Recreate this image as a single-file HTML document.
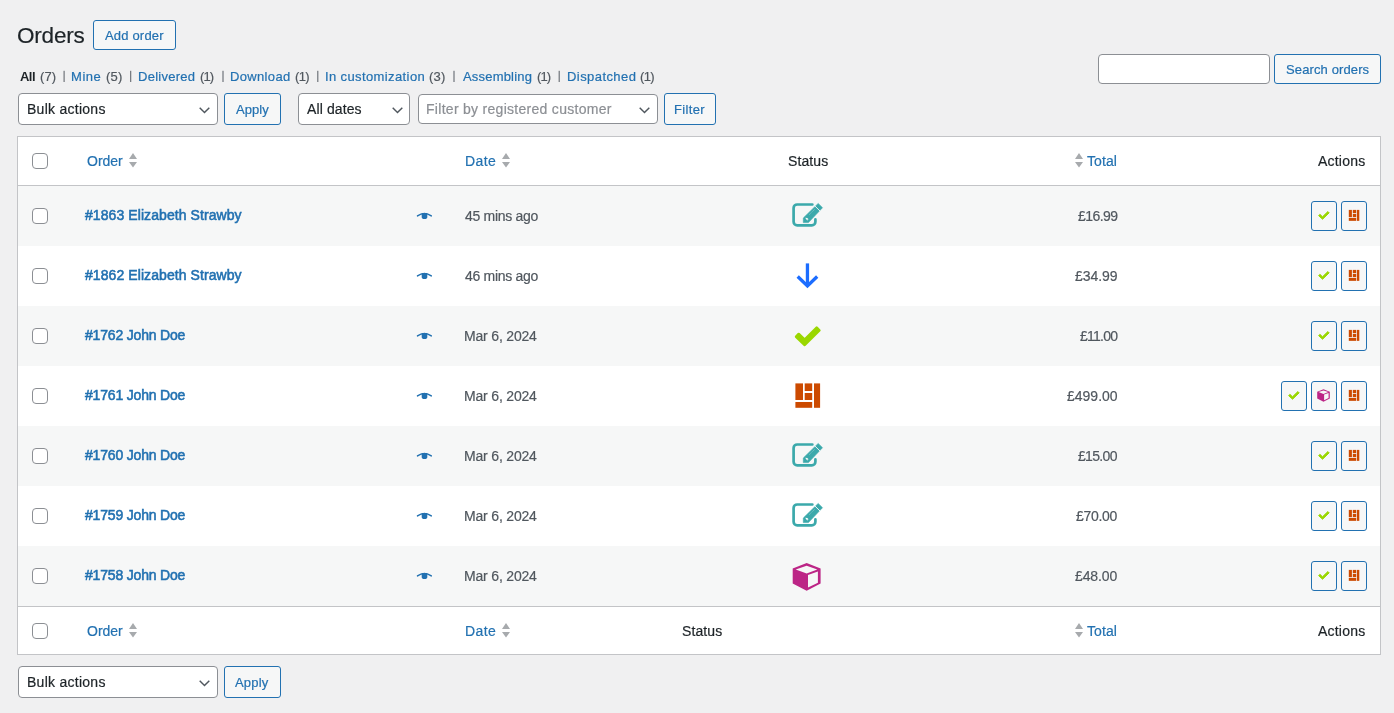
<!DOCTYPE html><html><head><meta charset="utf-8"><style>
html,body{margin:0;padding:0;}
body{width:1394px;height:713px;overflow:hidden;background:#f0f0f1;font-family:"Liberation Sans", sans-serif;position:relative;}
.t{position:absolute;white-space:nowrap;will-change:transform;}
.b{position:absolute;box-sizing:border-box;}
svg{position:absolute;overflow:visible;}
</style></head><body>
<div class="b" style="left:93px;top:20px;width:83px;height:30px;border:1px solid #2271b1;border-radius:3px;background:#f6f7f7;"></div>
<svg style="left:0;top:0" width="700" height="100"><rect x="63.55" y="70.8" width="1.1" height="11.2" fill="#646970"/><rect x="130.15" y="70.8" width="1.1" height="11.2" fill="#646970"/><rect x="222.45" y="70.8" width="1.1" height="11.2" fill="#646970"/><rect x="317.25" y="70.8" width="1.1" height="11.2" fill="#646970"/><rect x="453.45" y="70.8" width="1.1" height="11.2" fill="#646970"/><rect x="558.65" y="70.8" width="1.1" height="11.2" fill="#646970"/></svg>
<div class="b" style="left:1098px;top:54px;width:172px;height:30px;border:1px solid #8c8f94;border-radius:4px;background:#fff;"></div>
<div class="b" style="left:1274px;top:54px;width:107px;height:30px;border:1px solid #2271b1;border-radius:3px;background:#f6f7f7;"></div>
<div class="b" style="left:18px;top:93px;width:200px;height:32px;border:1px solid #8c8f94;border-radius:4px;background:#fff;"></div>
<svg style="left:198.5px;top:106.5px" width="11" height="7"><path d="M0.7 0.7 L5.5 5.5 L10.3 0.7" fill="none" stroke="#50575e" stroke-width="1.45"/></svg>
<div class="b" style="left:224px;top:93px;width:57px;height:32px;border:1px solid #2271b1;border-radius:3px;background:#f6f7f7;"></div>
<div class="b" style="left:298px;top:93px;width:112px;height:32px;border:1px solid #8c8f94;border-radius:4px;background:#fff;"></div>
<svg style="left:391.5px;top:106.5px" width="11" height="7"><path d="M0.7 0.7 L5.5 5.5 L10.3 0.7" fill="none" stroke="#50575e" stroke-width="1.45"/></svg>
<div class="b" style="left:418px;top:94px;width:240px;height:30px;border:1px solid #8c8f94;border-radius:4px;background:#fff;"></div>
<svg style="left:638.5px;top:106.5px" width="11" height="7"><path d="M0.7 0.7 L5.5 5.5 L10.3 0.7" fill="none" stroke="#50575e" stroke-width="1.45"/></svg>
<div class="b" style="left:664px;top:93px;width:52px;height:32px;border:1px solid #2271b1;border-radius:3px;background:#f6f7f7;"></div>
<div class="b" style="left:17px;top:136px;width:1364px;height:519px;border:1px solid #c3c4c7;background:#fff;"></div>
<div class="b" style="left:18px;top:185px;width:1362px;height:1px;background:#c3c4c7;"></div>
<div class="b" style="left:18px;top:606px;width:1362px;height:1px;background:#c3c4c7;"></div>
<div class="b" style="left:18px;top:186px;width:1362px;height:60px;background:#f6f7f7;"></div>
<div class="b" style="left:18px;top:306px;width:1362px;height:60px;background:#f6f7f7;"></div>
<div class="b" style="left:18px;top:426px;width:1362px;height:60px;background:#f6f7f7;"></div>
<div class="b" style="left:18px;top:546px;width:1362px;height:60px;background:#f6f7f7;"></div>
<div class="b" style="left:32px;top:153px;width:16px;height:16px;border:1px solid #8c8f94;border-radius:4px;background:#fff;"></div>
<svg style="left:129px;top:153px" width="8" height="15"><path d="M4 0 L8 6 L0 6Z M0 9 L8 9 L4 14.5Z" fill="#a7aaad"/></svg>
<svg style="left:502px;top:153px" width="8" height="15"><path d="M4 0 L8 6 L0 6Z M0 9 L8 9 L4 14.5Z" fill="#a7aaad"/></svg>
<svg style="left:1075px;top:153px" width="8" height="15"><path d="M4 0 L8 6 L0 6Z M0 9 L8 9 L4 14.5Z" fill="#a7aaad"/></svg>
<div class="b" style="left:32px;top:623px;width:16px;height:16px;border:1px solid #8c8f94;border-radius:4px;background:#fff;"></div>
<svg style="left:129px;top:623px" width="8" height="15"><path d="M4 0 L8 6 L0 6Z M0 9 L8 9 L4 14.5Z" fill="#a7aaad"/></svg>
<svg style="left:502px;top:623px" width="8" height="15"><path d="M4 0 L8 6 L0 6Z M0 9 L8 9 L4 14.5Z" fill="#a7aaad"/></svg>
<svg style="left:1075px;top:623px" width="8" height="15"><path d="M4 0 L8 6 L0 6Z M0 9 L8 9 L4 14.5Z" fill="#a7aaad"/></svg>
<div class="b" style="left:32px;top:208px;width:16px;height:16px;border:1px solid #8c8f94;border-radius:4px;background:#fff;"></div>
<svg style="left:412px;top:206px" width="25" height="18" viewBox="0 0 25 18"><path d="M5.5 9.9 Q12.4 5 19.3 9.9" fill="none" stroke="#2271b1" stroke-width="1.5" stroke-linecap="round"/><path d="M9.7 6.9 H15.3 V11 Q15.3 13 12.5 13 Q9.7 13 9.7 11Z" fill="#2271b1"/></svg>
<svg style="left:780px;top:186px" width="60" height="60" viewBox="780 0 60 60"><path d="M812.35 18.5 H797.2 A3.6 3.6 0 0 0 793.6 22.1 V35.75 A3.6 3.6 0 0 0 797.2 39.35 H811.8 A3.6 3.6 0 0 0 815.4 35.75 V33.45" fill="none" stroke="#3ba9ab" stroke-width="2.7" stroke-linecap="round"/><path d="M803.3 36.6 L803.3 32.0 L818.2 17.4 L822.5 21.7 L808.4 36.6Z" fill="#3ba9ab" stroke="#3ba9ab" stroke-width="0.6" stroke-linejoin="round"/><path d="M814.6 19.7 L820.3 25.3" stroke="#f6f7f7" stroke-width="0.9"/><path d="M805.2 31.8 L807.2 32.0 L808.7 33.2 L807.6 33.5 L807.5 34.8 L806.4 33.5Z" fill="#f6f7f7"/><path d="M809.2 28.7 L814.9 23.2" stroke="#ffffff" stroke-opacity="0.5" stroke-width="0.7" stroke-dasharray="1 0.8"/></svg>
<div class="b" style="left:1311px;top:201px;width:26px;height:30px;border:1px solid #2271b1;border-radius:3px;background:#f6f7f7;"></div>
<svg style="left:1311px;top:201px" width="26" height="30" viewBox="0 0 26 30"><polygon points="7.66,14.65 11.57,18.24 18.17,11.84 16.91,10.55 11.53,15.76 8.88,13.33" fill="#9ad700" stroke="#9ad700" stroke-width="1" stroke-linejoin="round"/></svg>
<div class="b" style="left:1341px;top:201px;width:26px;height:30px;border:1px solid #2271b1;border-radius:3px;background:#f6f7f7;"></div>
<svg style="left:1341px;top:201px" width="26" height="30" viewBox="0 0 26 30"><g fill="#cc4a00"><rect x="7.8" y="8.9" width="3.1" height="7.2"/><rect x="11.8" y="8.9" width="3.4" height="3.1"/><rect x="11.8" y="12.8" width="3.4" height="3.3"/><rect x="7.8" y="16.9" width="7.4" height="2.95"/><rect x="15.9" y="8.9" width="2.4" height="10.95"/></g></svg>
<div class="b" style="left:32px;top:268px;width:16px;height:16px;border:1px solid #8c8f94;border-radius:4px;background:#fff;"></div>
<svg style="left:412px;top:266px" width="25" height="18" viewBox="0 0 25 18"><path d="M5.5 9.9 Q12.4 5 19.3 9.9" fill="none" stroke="#2271b1" stroke-width="1.5" stroke-linecap="round"/><path d="M9.7 6.9 H15.3 V11 Q15.3 13 12.5 13 Q9.7 13 9.7 11Z" fill="#2271b1"/></svg>
<svg style="left:780px;top:246px" width="60" height="60" viewBox="780 0 60 60"><path d="M807.45 17.4 V39" stroke="#1c6dff" stroke-width="3.3"/><path d="M797.7 30.5 L807.45 40 L817.2 30.5" fill="none" stroke="#1c6dff" stroke-width="3.3" stroke-miterlimit="4"/></svg>
<div class="b" style="left:1311px;top:261px;width:26px;height:30px;border:1px solid #2271b1;border-radius:3px;background:#f6f7f7;"></div>
<svg style="left:1311px;top:261px" width="26" height="30" viewBox="0 0 26 30"><polygon points="7.66,14.65 11.57,18.24 18.17,11.84 16.91,10.55 11.53,15.76 8.88,13.33" fill="#9ad700" stroke="#9ad700" stroke-width="1" stroke-linejoin="round"/></svg>
<div class="b" style="left:1341px;top:261px;width:26px;height:30px;border:1px solid #2271b1;border-radius:3px;background:#f6f7f7;"></div>
<svg style="left:1341px;top:261px" width="26" height="30" viewBox="0 0 26 30"><g fill="#cc4a00"><rect x="7.8" y="8.9" width="3.1" height="7.2"/><rect x="11.8" y="8.9" width="3.4" height="3.1"/><rect x="11.8" y="12.8" width="3.4" height="3.3"/><rect x="7.8" y="16.9" width="7.4" height="2.95"/><rect x="15.9" y="8.9" width="2.4" height="10.95"/></g></svg>
<div class="b" style="left:32px;top:328px;width:16px;height:16px;border:1px solid #8c8f94;border-radius:4px;background:#fff;"></div>
<svg style="left:412px;top:326px" width="25" height="18" viewBox="0 0 25 18"><path d="M5.5 9.9 Q12.4 5 19.3 9.9" fill="none" stroke="#2271b1" stroke-width="1.5" stroke-linecap="round"/><path d="M9.7 6.9 H15.3 V11 Q15.3 13 12.5 13 Q9.7 13 9.7 11Z" fill="#2271b1"/></svg>
<svg style="left:780px;top:306px" width="60" height="60" viewBox="780 0 60 60"><polygon points="796.13,30.77 804.73,38.95 819.37,24.36 816.69,21.67 804.67,33.65 798.75,28.02" fill="#9ad700" stroke="#9ad700" stroke-width="2.6" stroke-linejoin="round"/></svg>
<div class="b" style="left:1311px;top:321px;width:26px;height:30px;border:1px solid #2271b1;border-radius:3px;background:#f6f7f7;"></div>
<svg style="left:1311px;top:321px" width="26" height="30" viewBox="0 0 26 30"><polygon points="7.66,14.65 11.57,18.24 18.17,11.84 16.91,10.55 11.53,15.76 8.88,13.33" fill="#9ad700" stroke="#9ad700" stroke-width="1" stroke-linejoin="round"/></svg>
<div class="b" style="left:1341px;top:321px;width:26px;height:30px;border:1px solid #2271b1;border-radius:3px;background:#f6f7f7;"></div>
<svg style="left:1341px;top:321px" width="26" height="30" viewBox="0 0 26 30"><g fill="#cc4a00"><rect x="7.8" y="8.9" width="3.1" height="7.2"/><rect x="11.8" y="8.9" width="3.4" height="3.1"/><rect x="11.8" y="12.8" width="3.4" height="3.3"/><rect x="7.8" y="16.9" width="7.4" height="2.95"/><rect x="15.9" y="8.9" width="2.4" height="10.95"/></g></svg>
<div class="b" style="left:32px;top:388px;width:16px;height:16px;border:1px solid #8c8f94;border-radius:4px;background:#fff;"></div>
<svg style="left:412px;top:386px" width="25" height="18" viewBox="0 0 25 18"><path d="M5.5 9.9 Q12.4 5 19.3 9.9" fill="none" stroke="#2271b1" stroke-width="1.5" stroke-linecap="round"/><path d="M9.7 6.9 H15.3 V11 Q15.3 13 12.5 13 Q9.7 13 9.7 11Z" fill="#2271b1"/></svg>
<svg style="left:780px;top:366px" width="60" height="60" viewBox="780 0 60 60"><g fill="#cc4a00"><rect x="795.4" y="17.4" width="7.6" height="16.6"/><rect x="804.7" y="17.4" width="7.5" height="7.6"/><rect x="804.7" y="27" width="7.5" height="7"/><rect x="795.4" y="36" width="16.8" height="5.8"/><rect x="814" y="17.4" width="6.1" height="24.4"/></g></svg>
<div class="b" style="left:1281px;top:381px;width:26px;height:30px;border:1px solid #2271b1;border-radius:3px;background:#f6f7f7;"></div>
<svg style="left:1281px;top:381px" width="26" height="30" viewBox="0 0 26 30"><polygon points="7.66,14.65 11.57,18.24 18.17,11.84 16.91,10.55 11.53,15.76 8.88,13.33" fill="#9ad700" stroke="#9ad700" stroke-width="1" stroke-linejoin="round"/></svg>
<div class="b" style="left:1311px;top:381px;width:26px;height:30px;border:1px solid #2271b1;border-radius:3px;background:#f6f7f7;"></div>
<svg style="left:1311px;top:381px" width="26" height="30" viewBox="0 0 26 30"><path d="M12.50 8.20 L18.80 10.66 L18.80 17.43 L12.50 20.73 L6.20 17.43 L6.20 10.66ZM12.50 9.39 L17.31 11.11 L12.50 12.91 L7.55 11.11ZM13.11 13.59 L17.58 12.01 L17.58 17.11 L13.11 19.28Z" fill="#bc2586" fill-rule="evenodd"/></svg>
<div class="b" style="left:1341px;top:381px;width:26px;height:30px;border:1px solid #2271b1;border-radius:3px;background:#f6f7f7;"></div>
<svg style="left:1341px;top:381px" width="26" height="30" viewBox="0 0 26 30"><g fill="#cc4a00"><rect x="7.8" y="8.9" width="3.1" height="7.2"/><rect x="11.8" y="8.9" width="3.4" height="3.1"/><rect x="11.8" y="12.8" width="3.4" height="3.3"/><rect x="7.8" y="16.9" width="7.4" height="2.95"/><rect x="15.9" y="8.9" width="2.4" height="10.95"/></g></svg>
<div class="b" style="left:32px;top:448px;width:16px;height:16px;border:1px solid #8c8f94;border-radius:4px;background:#fff;"></div>
<svg style="left:412px;top:446px" width="25" height="18" viewBox="0 0 25 18"><path d="M5.5 9.9 Q12.4 5 19.3 9.9" fill="none" stroke="#2271b1" stroke-width="1.5" stroke-linecap="round"/><path d="M9.7 6.9 H15.3 V11 Q15.3 13 12.5 13 Q9.7 13 9.7 11Z" fill="#2271b1"/></svg>
<svg style="left:780px;top:426px" width="60" height="60" viewBox="780 0 60 60"><path d="M812.35 18.5 H797.2 A3.6 3.6 0 0 0 793.6 22.1 V35.75 A3.6 3.6 0 0 0 797.2 39.35 H811.8 A3.6 3.6 0 0 0 815.4 35.75 V33.45" fill="none" stroke="#3ba9ab" stroke-width="2.7" stroke-linecap="round"/><path d="M803.3 36.6 L803.3 32.0 L818.2 17.4 L822.5 21.7 L808.4 36.6Z" fill="#3ba9ab" stroke="#3ba9ab" stroke-width="0.6" stroke-linejoin="round"/><path d="M814.6 19.7 L820.3 25.3" stroke="#f6f7f7" stroke-width="0.9"/><path d="M805.2 31.8 L807.2 32.0 L808.7 33.2 L807.6 33.5 L807.5 34.8 L806.4 33.5Z" fill="#f6f7f7"/><path d="M809.2 28.7 L814.9 23.2" stroke="#ffffff" stroke-opacity="0.5" stroke-width="0.7" stroke-dasharray="1 0.8"/></svg>
<div class="b" style="left:1311px;top:441px;width:26px;height:30px;border:1px solid #2271b1;border-radius:3px;background:#f6f7f7;"></div>
<svg style="left:1311px;top:441px" width="26" height="30" viewBox="0 0 26 30"><polygon points="7.66,14.65 11.57,18.24 18.17,11.84 16.91,10.55 11.53,15.76 8.88,13.33" fill="#9ad700" stroke="#9ad700" stroke-width="1" stroke-linejoin="round"/></svg>
<div class="b" style="left:1341px;top:441px;width:26px;height:30px;border:1px solid #2271b1;border-radius:3px;background:#f6f7f7;"></div>
<svg style="left:1341px;top:441px" width="26" height="30" viewBox="0 0 26 30"><g fill="#cc4a00"><rect x="7.8" y="8.9" width="3.1" height="7.2"/><rect x="11.8" y="8.9" width="3.4" height="3.1"/><rect x="11.8" y="12.8" width="3.4" height="3.3"/><rect x="7.8" y="16.9" width="7.4" height="2.95"/><rect x="15.9" y="8.9" width="2.4" height="10.95"/></g></svg>
<div class="b" style="left:32px;top:508px;width:16px;height:16px;border:1px solid #8c8f94;border-radius:4px;background:#fff;"></div>
<svg style="left:412px;top:506px" width="25" height="18" viewBox="0 0 25 18"><path d="M5.5 9.9 Q12.4 5 19.3 9.9" fill="none" stroke="#2271b1" stroke-width="1.5" stroke-linecap="round"/><path d="M9.7 6.9 H15.3 V11 Q15.3 13 12.5 13 Q9.7 13 9.7 11Z" fill="#2271b1"/></svg>
<svg style="left:780px;top:486px" width="60" height="60" viewBox="780 0 60 60"><path d="M812.35 18.5 H797.2 A3.6 3.6 0 0 0 793.6 22.1 V35.75 A3.6 3.6 0 0 0 797.2 39.35 H811.8 A3.6 3.6 0 0 0 815.4 35.75 V33.45" fill="none" stroke="#3ba9ab" stroke-width="2.7" stroke-linecap="round"/><path d="M803.3 36.6 L803.3 32.0 L818.2 17.4 L822.5 21.7 L808.4 36.6Z" fill="#3ba9ab" stroke="#3ba9ab" stroke-width="0.6" stroke-linejoin="round"/><path d="M814.6 19.7 L820.3 25.3" stroke="#ffffff" stroke-width="0.9"/><path d="M805.2 31.8 L807.2 32.0 L808.7 33.2 L807.6 33.5 L807.5 34.8 L806.4 33.5Z" fill="#ffffff"/><path d="M809.2 28.7 L814.9 23.2" stroke="#ffffff" stroke-opacity="0.5" stroke-width="0.7" stroke-dasharray="1 0.8"/></svg>
<div class="b" style="left:1311px;top:501px;width:26px;height:30px;border:1px solid #2271b1;border-radius:3px;background:#f6f7f7;"></div>
<svg style="left:1311px;top:501px" width="26" height="30" viewBox="0 0 26 30"><polygon points="7.66,14.65 11.57,18.24 18.17,11.84 16.91,10.55 11.53,15.76 8.88,13.33" fill="#9ad700" stroke="#9ad700" stroke-width="1" stroke-linejoin="round"/></svg>
<div class="b" style="left:1341px;top:501px;width:26px;height:30px;border:1px solid #2271b1;border-radius:3px;background:#f6f7f7;"></div>
<svg style="left:1341px;top:501px" width="26" height="30" viewBox="0 0 26 30"><g fill="#cc4a00"><rect x="7.8" y="8.9" width="3.1" height="7.2"/><rect x="11.8" y="8.9" width="3.4" height="3.1"/><rect x="11.8" y="12.8" width="3.4" height="3.3"/><rect x="7.8" y="16.9" width="7.4" height="2.95"/><rect x="15.9" y="8.9" width="2.4" height="10.95"/></g></svg>
<div class="b" style="left:32px;top:568px;width:16px;height:16px;border:1px solid #8c8f94;border-radius:4px;background:#fff;"></div>
<svg style="left:412px;top:566px" width="25" height="18" viewBox="0 0 25 18"><path d="M5.5 9.9 Q12.4 5 19.3 9.9" fill="none" stroke="#2271b1" stroke-width="1.5" stroke-linecap="round"/><path d="M9.7 6.9 H15.3 V11 Q15.3 13 12.5 13 Q9.7 13 9.7 11Z" fill="#2271b1"/></svg>
<svg style="left:780px;top:546px" width="60" height="60" viewBox="780 0 60 60"><path d="M806.66 17.06 L820.60 22.50 L820.60 37.50 L806.66 44.80 L792.70 37.50 L792.70 22.50ZM806.66 19.70 L817.30 23.50 L806.66 27.50 L795.70 23.50ZM808.00 29.00 L817.90 25.50 L817.90 36.80 L808.00 41.60Z" fill="#bc2586" fill-rule="evenodd"/></svg>
<div class="b" style="left:1311px;top:561px;width:26px;height:30px;border:1px solid #2271b1;border-radius:3px;background:#f6f7f7;"></div>
<svg style="left:1311px;top:561px" width="26" height="30" viewBox="0 0 26 30"><polygon points="7.66,14.65 11.57,18.24 18.17,11.84 16.91,10.55 11.53,15.76 8.88,13.33" fill="#9ad700" stroke="#9ad700" stroke-width="1" stroke-linejoin="round"/></svg>
<div class="b" style="left:1341px;top:561px;width:26px;height:30px;border:1px solid #2271b1;border-radius:3px;background:#f6f7f7;"></div>
<svg style="left:1341px;top:561px" width="26" height="30" viewBox="0 0 26 30"><g fill="#cc4a00"><rect x="7.8" y="8.9" width="3.1" height="7.2"/><rect x="11.8" y="8.9" width="3.4" height="3.1"/><rect x="11.8" y="12.8" width="3.4" height="3.3"/><rect x="7.8" y="16.9" width="7.4" height="2.95"/><rect x="15.9" y="8.9" width="2.4" height="10.95"/></g></svg>
<div class="b" style="left:18px;top:666px;width:200px;height:32px;border:1px solid #8c8f94;border-radius:4px;background:#fff;"></div>
<svg style="left:198.5px;top:679.5px" width="11" height="7"><path d="M0.7 0.7 L5.5 5.5 L10.3 0.7" fill="none" stroke="#50575e" stroke-width="1.45"/></svg>
<div class="b" style="left:224px;top:666px;width:57px;height:32px;border:1px solid #2271b1;border-radius:3px;background:#f6f7f7;"></div>
<div class="t" style="left:16.70px;top:24.65px;font-size:22.5px;line-height:22.5px;color:#1d2327;font-weight:400;letter-spacing:-0.203px;-webkit-text-stroke:0.2px #1d2327;">Orders</div>
<div class="t" style="left:104.70px;top:29.00px;font-size:13px;line-height:13px;color:#2271b1;font-weight:400;letter-spacing:0.180px;-webkit-text-stroke:0.2px #2271b1;">Add order</div>
<div class="t" style="left:20.30px;top:70.00px;font-size:13px;line-height:13px;color:#1d2327;font-weight:700;letter-spacing:-0.550px;">All</div>
<div class="t" style="left:39.80px;top:70.00px;font-size:13px;line-height:13px;color:#50575e;font-weight:400;letter-spacing:0.120px;-webkit-text-stroke:0.2px #50575e;">(7)</div>
<div class="t" style="left:71.40px;top:70.00px;font-size:13px;line-height:13px;color:#2271b1;font-weight:400;letter-spacing:0.551px;-webkit-text-stroke:0.2px #2271b1;">Mine</div>
<div class="t" style="left:105.70px;top:70.00px;font-size:13px;line-height:13px;color:#50575e;font-weight:400;letter-spacing:0.220px;-webkit-text-stroke:0.2px #50575e;">(5)</div>
<div class="t" style="left:138.00px;top:70.00px;font-size:13px;line-height:13px;color:#2271b1;font-weight:400;letter-spacing:0.265px;-webkit-text-stroke:0.2px #2271b1;">Delivered</div>
<div class="t" style="left:199.80px;top:70.00px;font-size:13px;line-height:13px;color:#50575e;font-weight:400;letter-spacing:-0.880px;-webkit-text-stroke:0.2px #50575e;">(1)</div>
<div class="t" style="left:229.80px;top:70.00px;font-size:13px;line-height:13px;color:#2271b1;font-weight:400;letter-spacing:0.345px;-webkit-text-stroke:0.2px #2271b1;">Download</div>
<div class="t" style="left:294.60px;top:70.00px;font-size:13px;line-height:13px;color:#50575e;font-weight:400;letter-spacing:-0.680px;-webkit-text-stroke:0.2px #50575e;">(1)</div>
<div class="t" style="left:325.00px;top:70.00px;font-size:13px;line-height:13px;color:#2271b1;font-weight:400;letter-spacing:0.386px;-webkit-text-stroke:0.2px #2271b1;">In customization</div>
<div class="t" style="left:429.20px;top:70.00px;font-size:13px;line-height:13px;color:#50575e;font-weight:400;letter-spacing:0.270px;-webkit-text-stroke:0.2px #50575e;">(3)</div>
<div class="t" style="left:462.80px;top:70.00px;font-size:13px;line-height:13px;color:#2271b1;font-weight:400;letter-spacing:0.193px;-webkit-text-stroke:0.2px #2271b1;">Assembling</div>
<div class="t" style="left:536.70px;top:70.00px;font-size:13px;line-height:13px;color:#50575e;font-weight:400;letter-spacing:-0.930px;-webkit-text-stroke:0.2px #50575e;">(1)</div>
<div class="t" style="left:566.50px;top:70.00px;font-size:13px;line-height:13px;color:#2271b1;font-weight:400;letter-spacing:0.432px;-webkit-text-stroke:0.2px #2271b1;">Dispatched</div>
<div class="t" style="left:639.90px;top:70.00px;font-size:13px;line-height:13px;color:#50575e;font-weight:400;letter-spacing:-0.680px;-webkit-text-stroke:0.2px #50575e;">(1)</div>
<div class="t" style="left:1285.70px;top:63.00px;font-size:13px;line-height:13px;color:#2271b1;font-weight:400;letter-spacing:0.121px;-webkit-text-stroke:0.2px #2271b1;">Search orders</div>
<div class="t" style="left:26.80px;top:102.15px;font-size:14px;line-height:14px;color:#1d2327;font-weight:400;letter-spacing:0.265px;-webkit-text-stroke:0.2px #1d2327;">Bulk actions</div>
<div class="t" style="left:235.50px;top:103.00px;font-size:13px;line-height:13px;color:#2271b1;font-weight:400;letter-spacing:0.070px;-webkit-text-stroke:0.2px #2271b1;">Apply</div>
<div class="t" style="left:307.10px;top:102.15px;font-size:14px;line-height:14px;color:#1d2327;font-weight:400;letter-spacing:0.113px;-webkit-text-stroke:0.2px #1d2327;">All dates</div>
<div class="t" style="left:426.20px;top:102.15px;font-size:14px;line-height:14px;color:#8c8f94;font-weight:400;letter-spacing:0.288px;-webkit-text-stroke:0.2px #8c8f94;">Filter by registered customer</div>
<div class="t" style="left:673.80px;top:103.00px;font-size:13px;line-height:13px;color:#2271b1;font-weight:400;letter-spacing:0.328px;-webkit-text-stroke:0.2px #2271b1;">Filter</div>
<div class="t" style="left:86.50px;top:154.15px;font-size:14px;line-height:14px;color:#2271b1;font-weight:400;letter-spacing:-0.006px;-webkit-text-stroke:0.2px #2271b1;">Order</div>
<div class="t" style="left:465.00px;top:154.15px;font-size:14px;line-height:14px;color:#2271b1;font-weight:400;letter-spacing:0.405px;-webkit-text-stroke:0.2px #2271b1;">Date</div>
<div class="t" style="left:1087.20px;top:154.15px;font-size:14px;line-height:14px;color:#2271b1;font-weight:400;letter-spacing:0.085px;-webkit-text-stroke:0.2px #2271b1;">Total</div>
<div class="t" style="left:1318.25px;top:154.15px;font-size:14px;line-height:14px;color:#1d2327;font-weight:400;letter-spacing:0.207px;-webkit-text-stroke:0.2px #1d2327;">Actions</div>
<div class="t" style="left:86.50px;top:624.15px;font-size:14px;line-height:14px;color:#2271b1;font-weight:400;letter-spacing:-0.006px;-webkit-text-stroke:0.2px #2271b1;">Order</div>
<div class="t" style="left:465.00px;top:624.15px;font-size:14px;line-height:14px;color:#2271b1;font-weight:400;letter-spacing:0.405px;-webkit-text-stroke:0.2px #2271b1;">Date</div>
<div class="t" style="left:1087.20px;top:624.15px;font-size:14px;line-height:14px;color:#2271b1;font-weight:400;letter-spacing:0.085px;-webkit-text-stroke:0.2px #2271b1;">Total</div>
<div class="t" style="left:1318.25px;top:624.15px;font-size:14px;line-height:14px;color:#1d2327;font-weight:400;letter-spacing:0.207px;-webkit-text-stroke:0.2px #1d2327;">Actions</div>
<div class="t" style="left:787.80px;top:154.15px;font-size:14px;line-height:14px;color:#1d2327;font-weight:400;letter-spacing:0.102px;-webkit-text-stroke:0.2px #1d2327;">Status</div>
<div class="t" style="left:681.80px;top:624.15px;font-size:14px;line-height:14px;color:#1d2327;font-weight:400;letter-spacing:0.102px;-webkit-text-stroke:0.2px #1d2327;">Status</div>
<div class="t" style="left:85.20px;top:207.75px;font-size:14px;line-height:14px;color:#2271b1;font-weight:400;letter-spacing:0.078px;-webkit-text-stroke:0.55px #2271b1;">#1863 Elizabeth Strawby</div>
<div class="t" style="left:465.00px;top:209.15px;font-size:14px;line-height:14px;color:#50575e;font-weight:400;letter-spacing:-0.308px;-webkit-text-stroke:0.2px #50575e;">45 mins ago</div>
<div class="t" style="left:1077.60px;top:209.15px;font-size:14px;line-height:14px;color:#50575e;font-weight:400;letter-spacing:-0.567px;-webkit-text-stroke:0.2px #50575e;">£16.99</div>
<div class="t" style="left:85.20px;top:267.75px;font-size:14px;line-height:14px;color:#2271b1;font-weight:400;letter-spacing:0.078px;-webkit-text-stroke:0.55px #2271b1;">#1862 Elizabeth Strawby</div>
<div class="t" style="left:465.00px;top:269.15px;font-size:14px;line-height:14px;color:#50575e;font-weight:400;letter-spacing:-0.308px;-webkit-text-stroke:0.2px #50575e;">46 mins ago</div>
<div class="t" style="left:1075.00px;top:269.15px;font-size:14px;line-height:14px;color:#50575e;font-weight:400;letter-spacing:-0.047px;-webkit-text-stroke:0.2px #50575e;">£34.99</div>
<div class="t" style="left:85.20px;top:327.75px;font-size:14px;line-height:14px;color:#2271b1;font-weight:400;letter-spacing:-0.182px;-webkit-text-stroke:0.55px #2271b1;">#1762 John Doe</div>
<div class="t" style="left:464.00px;top:329.15px;font-size:14px;line-height:14px;color:#50575e;font-weight:400;letter-spacing:-0.182px;-webkit-text-stroke:0.2px #50575e;">Mar 6, 2024</div>
<div class="t" style="left:1079.60px;top:329.15px;font-size:14px;line-height:14px;color:#50575e;font-weight:400;letter-spacing:-0.759px;-webkit-text-stroke:0.2px #50575e;">£11.00</div>
<div class="t" style="left:85.20px;top:387.75px;font-size:14px;line-height:14px;color:#2271b1;font-weight:400;letter-spacing:-0.182px;-webkit-text-stroke:0.55px #2271b1;">#1761 John Doe</div>
<div class="t" style="left:464.00px;top:389.15px;font-size:14px;line-height:14px;color:#50575e;font-weight:400;letter-spacing:-0.182px;-webkit-text-stroke:0.2px #50575e;">Mar 6, 2024</div>
<div class="t" style="left:1067.00px;top:389.15px;font-size:14px;line-height:14px;color:#50575e;font-weight:400;letter-spacing:-0.003px;-webkit-text-stroke:0.2px #50575e;">£499.00</div>
<div class="t" style="left:85.20px;top:447.75px;font-size:14px;line-height:14px;color:#2271b1;font-weight:400;letter-spacing:-0.182px;-webkit-text-stroke:0.55px #2271b1;">#1760 John Doe</div>
<div class="t" style="left:464.00px;top:449.15px;font-size:14px;line-height:14px;color:#50575e;font-weight:400;letter-spacing:-0.182px;-webkit-text-stroke:0.2px #50575e;">Mar 6, 2024</div>
<div class="t" style="left:1078.10px;top:449.15px;font-size:14px;line-height:14px;color:#50575e;font-weight:400;letter-spacing:-0.667px;-webkit-text-stroke:0.2px #50575e;">£15.00</div>
<div class="t" style="left:85.20px;top:507.75px;font-size:14px;line-height:14px;color:#2271b1;font-weight:400;letter-spacing:-0.182px;-webkit-text-stroke:0.55px #2271b1;">#1759 John Doe</div>
<div class="t" style="left:464.00px;top:509.15px;font-size:14px;line-height:14px;color:#50575e;font-weight:400;letter-spacing:-0.182px;-webkit-text-stroke:0.2px #50575e;">Mar 6, 2024</div>
<div class="t" style="left:1076.40px;top:509.15px;font-size:14px;line-height:14px;color:#50575e;font-weight:400;letter-spacing:-0.327px;-webkit-text-stroke:0.2px #50575e;">£70.00</div>
<div class="t" style="left:85.20px;top:567.75px;font-size:14px;line-height:14px;color:#2271b1;font-weight:400;letter-spacing:-0.182px;-webkit-text-stroke:0.55px #2271b1;">#1758 John Doe</div>
<div class="t" style="left:464.00px;top:569.15px;font-size:14px;line-height:14px;color:#50575e;font-weight:400;letter-spacing:-0.182px;-webkit-text-stroke:0.2px #50575e;">Mar 6, 2024</div>
<div class="t" style="left:1075.40px;top:569.15px;font-size:14px;line-height:14px;color:#50575e;font-weight:400;letter-spacing:-0.127px;-webkit-text-stroke:0.2px #50575e;">£48.00</div>
<div class="t" style="left:26.80px;top:675.15px;font-size:14px;line-height:14px;color:#1d2327;font-weight:400;letter-spacing:0.265px;-webkit-text-stroke:0.2px #1d2327;">Bulk actions</div>
<div class="t" style="left:235.30px;top:676.00px;font-size:13px;line-height:13px;color:#2271b1;font-weight:400;letter-spacing:0.170px;-webkit-text-stroke:0.2px #2271b1;">Apply</div>
</body></html>
